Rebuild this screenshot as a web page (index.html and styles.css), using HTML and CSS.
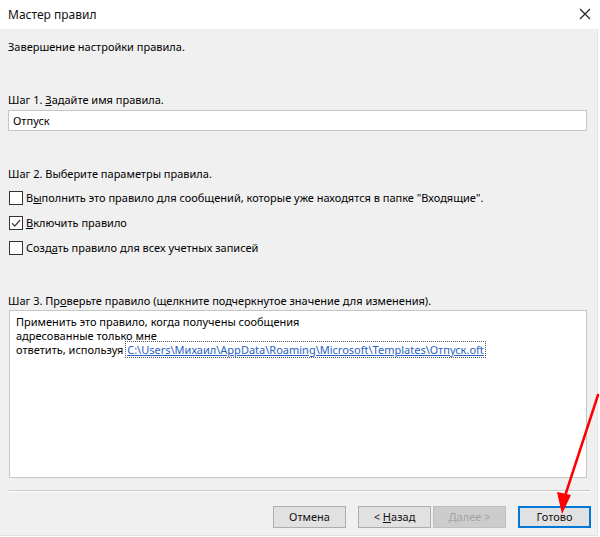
FILE: index.html
```html
<!DOCTYPE html>
<html lang="ru">
<head>
<meta charset="utf-8">
<title>Мастер правил</title>
<link rel="stylesheet" href="styles.css">
</head>
<body>
<div class="window">
  <div class="titlebar">
    <span class="title">Мастер правил</span>
    <svg class="close" width="12" height="12" viewBox="0 0 12 12"><path d="M1 1L11 11M11 1L1 11" stroke="#222" stroke-width="1.2" fill="none"/></svg>
  </div>
  <div class="body">
    <div class="heading">Завершение настройки правила.</div>

    <div class="step step1">Шаг 1. <u>З</u>адайте имя правила.</div>
    <div class="input">Отпуск</div>

    <div class="step step2">Шаг 2. Выберите параметры правила.</div>
    <div class="checks">
      <div class="check"><span class="box"></span><span>В<u>ы</u>полнить это правило для сообщений, которые уже находятся в папке "Входящие".</span></div>
      <div class="check"><span class="box checked"><svg width="12" height="12" viewBox="0 0 12 12"><path d="M2 6.2L4.8 9L10.2 3" stroke="#444" stroke-width="1.3" fill="none"/></svg></span><span><u>В</u>ключить правило</span></div>
      <div class="check"><span class="box"></span><span>Созд<u>а</u>ть правило для всех учетных записей</span></div>
    </div>

    <div class="step step3">Шаг 3. Пр<u>о</u>верьте правило (щелкните подчеркнутое значение для изменения).</div>
    <div class="rulebox">
      <div>Применить это правило, когда получены сообщения</div>
      <div>адресованные только мне</div>
      <div>ответить, используя <span class="link">C:\Users\Михаил\AppData\Roaming\Microsoft\Templates\Отпуск.oft</span></div>
    </div>

    <div class="separator"></div>

    <div class="buttons">
      <button class="btn">Отмена</button>
      <div class="pair">
        <button class="btn">&lt; <u>Н</u>азад</button>
        <button class="btn disabled"><u>Д</u>алее &gt;</button>
      </div>
      <button class="btn default">Готово</button>
    </div>
  </div>
  <svg class="arrow" width="60" height="130" viewBox="0 0 60 130">
    <path d="M58 6L24 110" stroke="#f00" stroke-width="2.5" fill="none" stroke-linecap="round"/>
    <path d="M17 103L22 125L31 106Z" fill="#f00"/>
  </svg>
</div>
</body>
</html>
```
FILE: styles.css
```css
* { box-sizing: border-box; }
html, body { margin: 0; padding: 0; background: #fff; }
body {
  font-family: "Noto Sans", "Open Sans", sans-serif;
  font-size: 11px;
  color: #000;
  width: 600px;
  height: 537px;
  overflow: hidden;
}
.window {
  position: relative;
  width: 600px;
  height: 537px;
  display: flex;
  flex-direction: column;
}
.titlebar {
  height: 29px;
  background: #fff;
  display: flex;
  align-items: center;
  justify-content: space-between;
  padding: 0 9px 0 8px;
}
.title { font-size: 12px; color: #111; }
.close { margin-top: -1px; }
.body {
  width: 598px;
  height: 507px;
  background: #f0f0f0;
  border-right: 1px solid #e2e2e2;
  border-bottom: 1px solid #e2e2e2;
  padding: 0 11px 0 8px;
  display: flex;
  flex-direction: column;
}
.heading { margin-top: 10px; line-height: 16px; }
.step { line-height: 16px; }
.step1 { margin-top: 37px; }
.input {
  margin-top: 2px;
  height: 21px;
  width: 579px;
  background: #fff;
  border: 1px solid #c6c6c6;
  padding: 2px 4px;
  line-height: 15px;
}
.step2 { margin-top: 35px; }
.checks {
  margin-top: 9px;
  display: flex;
  flex-direction: column;
  gap: 11px;
}
.check {
  display: flex;
  align-items: center;
  gap: 3px;
  line-height: 14px;
}
.box {
  width: 14px;
  height: 14px;
  border: 1px solid #333;
  background: #fff;
  display: flex;
  align-items: center;
  justify-content: center;
  margin-left: 1px;
}
.step3 { margin-top: 38px; }
.rulebox {
  margin-top: 1px;
  margin-left: 1px;
  width: 578px;
  height: 168px;
  background: #fff;
  border: 1px solid #c6c6c6;
  padding: 4px 6px;
  line-height: 14px;
}
.link {
  color: #2a62c0;
  text-decoration: underline;
  outline: 1px dotted #555;
  outline-offset: 0;
  padding: 0 1px;
}
.separator {
  margin-top: 12px;
  margin-left: 1px;
  width: 581px;
  height: 2px;
  border-top: 1px solid #c9c9c9;
  border-bottom: 1px solid #fff;
}
.buttons {
  margin-top: 14px;
  display: flex;
  justify-content: flex-end;
  gap: 12px;
  margin-right: -5px;
}
.pair { display: flex; gap: 2px; }
.btn {
  width: 73px;
  height: 22px;
  font-family: inherit;
  font-size: 11px;
  color: #111;
  background: #e1e1e1;
  border: 1px solid #adadad;
  padding: 0;
  line-height: 18px;
}
.btn.disabled {
  background: #cccccc;
  border-color: #bfbfbf;
  color: #a3a3a3;
}
.btn.default {
  border: 2px solid #0078d7;
  line-height: 16px;
}
.arrow {
  position: absolute;
  left: 540px;
  top: 389px;
}
```
